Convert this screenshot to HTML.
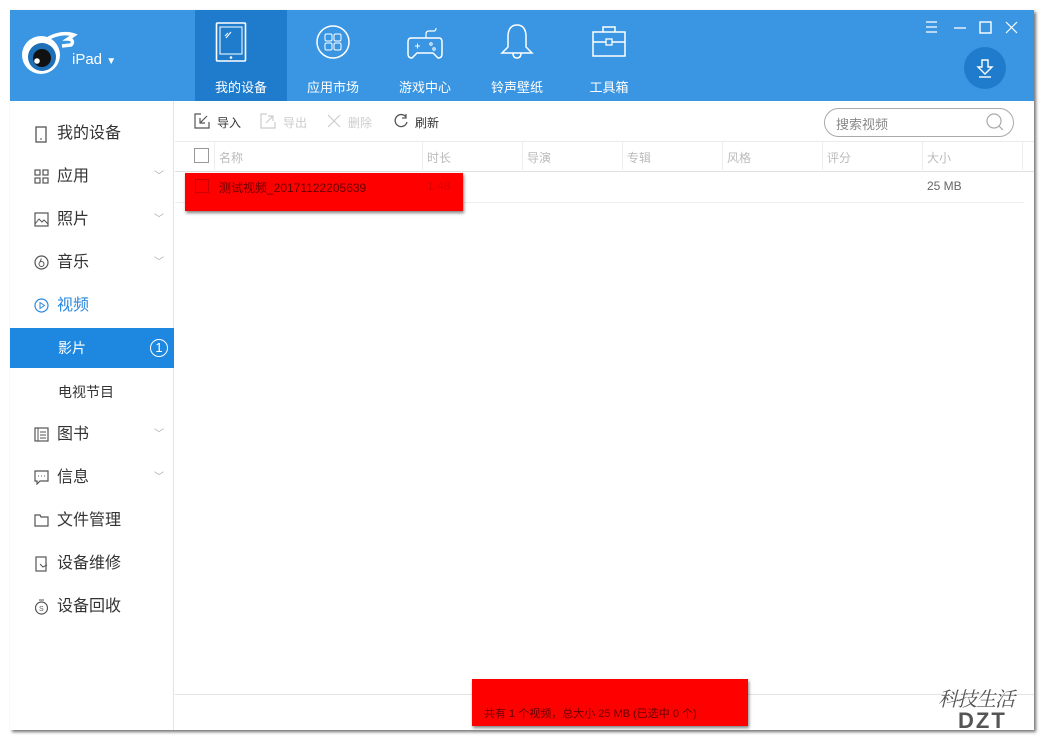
<!DOCTYPE html>
<html><head><meta charset="utf-8">
<style>
*{margin:0;padding:0;box-sizing:border-box}
body{width:1048px;height:742px;background:#fff;position:relative;overflow:hidden;font-family:"Liberation Sans","Noto Sans CJK SC",sans-serif;font-size:13px;color:#333}
.win{position:absolute;left:10px;top:10px;width:1024px;height:720px;background:#fff;box-shadow:2px 2px 3px rgba(0,0,0,.55)}
.hdr{position:absolute;left:0;top:0;width:1024px;height:91px;background:#3a96e2}
.tab{position:absolute;top:0;width:92px;height:91px;color:#fff;text-align:center;font-size:13px}
.tab.act{background:#1f7ccc}
.tab svg{position:absolute;left:26px;top:12px}
.tab span{position:absolute;left:0;right:0;top:67px}
.side{position:absolute;left:0;top:91px;width:164px;height:629px;border-right:1px solid #e3e3e3}
.it{position:absolute;left:0;width:164px;height:40px;line-height:40px;font-size:16px;color:#333}
.it svg{position:absolute;left:24px;top:12px}
.it .t{position:absolute;left:47px}
.it .ch{position:absolute;right:10px;top:0;font-size:10px;color:#aaa}
.sub{font-size:14px}
.sub .t{left:48px}
.tb{position:absolute;font-size:12px;color:#333;top:104px}
.th{position:absolute;top:149px;font-size:12px;color:#bbb}
.vl{position:absolute;top:142px;height:28px;width:1px;background:#eee}
</style></head><body>
<div class="win">
<div class="hdr">
 <svg style="position:absolute;left:8px;top:20px" width="60" height="50" viewBox="0 0 60 50">
  <path d="M28 10 C36 4 48 2 56 5 L50 9 C54 9 56 12 53 15 L44 16" fill="none" stroke="#fff" stroke-width="3.5"/>
  <circle cx="23" cy="25" r="19" fill="#fff"/>
  <circle cx="24" cy="27" r="14" fill="#1d6fb8"/>
  <circle cx="24" cy="28" r="9" fill="#111"/>
  <circle cx="19" cy="31" r="2.8" fill="#fff"/>
 </svg>
 <div style="position:absolute;left:62px;top:41px;color:#fff;font-size:15px">iPad <span style="font-size:10px">▼</span></div>
 <div class="tab act" style="left:185px">
  <svg style="left:20px" width="40" height="42" viewBox="0 0 40 42"><rect x="1.5" y="1" width="29" height="38" rx="1" fill="none" stroke="#fff" stroke-width="1.6"/><rect x="5" y="5" width="22" height="27" fill="none" stroke="#fff" stroke-width="1"/><circle cx="16" cy="35.5" r="1.3" fill="#fff"/><path d="M13 11l-3 3M16 10l-5 6" stroke="#fff"/></svg>
  <span>我的设备</span></div>
 <div class="tab" style="left:277px">
  <svg width="40" height="42" viewBox="0 0 40 42"><circle cx="20" cy="20" r="16" fill="none" stroke="#fff" stroke-width="1.5"/><rect x="12" y="12" width="7" height="7" rx="1.5" fill="none" stroke="#fff"/><rect x="21" y="12" width="7" height="7" rx="1.5" fill="none" stroke="#fff"/><rect x="12" y="21" width="7" height="7" rx="1.5" fill="none" stroke="#fff"/><rect x="21" y="21" width="7" height="7" rx="1.5" fill="none" stroke="#fff"/></svg>
  <span>应用市场</span></div>
 <div class="tab" style="left:369px">
  <svg width="40" height="42" viewBox="0 0 40 42"><path d="M6 16h28q3 0 3 4v12q0 4-4 4l-5-5H12l-5 5q-4 0-4-4V20q0-4 3-4z" fill="none" stroke="#fff" stroke-width="1.5"/><path d="M21 16v-4q0-3 3-3h5q2 0 2-3" fill="none" stroke="#fff" stroke-width="1.2"/><path d="M10 24h5M12.5 21.5v5" stroke="#fff"/><circle cx="26" cy="22" r="1.2" fill="none" stroke="#fff"/><circle cx="29" cy="27" r="1.2" fill="none" stroke="#fff"/></svg>
  <span>游戏中心</span></div>
 <div class="tab" style="left:461px">
  <svg width="40" height="42" viewBox="0 0 40 42"><path d="M20 3q-8 0-9 10v12l-6 6h30l-6-6V13q-1-10-9-10z" fill="none" stroke="#fff" stroke-width="1.5"/><path d="M16 31q0 5 4 5t4-5" fill="none" stroke="#fff" stroke-width="1.5"/></svg>
  <span>铃声壁纸</span></div>
 <div class="tab" style="left:553px">
  <svg width="40" height="42" viewBox="0 0 40 42"><rect x="4" y="10" width="32" height="24" fill="none" stroke="#fff" stroke-width="1.5"/><path d="M14 10V5h12v5M4 20h13M23 20h13" fill="none" stroke="#fff" stroke-width="1.5"/><rect x="17" y="17" width="6" height="6" fill="none" stroke="#fff" stroke-width="1.3"/></svg>
  <span>工具箱</span></div>
 <svg style="position:absolute;left:914px;top:10px" width="100" height="16" viewBox="0 0 100 16">
  <path d="M2 2h11M2 7h11M2 12h11" stroke="#fff" stroke-width="1.2"/>
  <path d="M30 8h12" stroke="#fff" stroke-width="1.3"/>
  <rect x="56" y="2" width="11" height="11" fill="none" stroke="#fff" stroke-width="1.4"/>
  <path d="M82 2l11 11M93 2L82 13" stroke="#fff" stroke-width="1.2"/>
 </svg>
 <div style="position:absolute;left:954px;top:37px;width:42px;height:42px;border-radius:50%;background:#1f7ccc"></div>
 <svg style="position:absolute;left:964px;top:47px" width="22" height="22" viewBox="0 0 22 22"><path d="M8 3h6v7h4l-7 7-7-7h4z" fill="none" stroke="#fff" stroke-width="1.4"/><path d="M5 20h12" stroke="#fff" stroke-width="1.4"/></svg>
</div>

<div class="side">
 <div class="it" style="top:13px"><svg width="14" height="17" viewBox="0 0 14 17"><rect x="2" y="1" width="10" height="15" fill="none" stroke="#555" stroke-width="1.3"/><path d="M6 13h2" stroke="#555"/></svg><span class="t">我的设备</span></div>
 <div class="it" style="top:56px"><svg width="15" height="15" viewBox="0 0 15 15"><g fill="none" stroke="#555" stroke-width="1.2"><rect x="1" y="1" width="5" height="5"/><rect x="9" y="1" width="5" height="5"/><rect x="1" y="9" width="5" height="5"/><rect x="9" y="9" width="5" height="5"/></g></svg><span class="t">应用</span><span class="ch">﹀</span></div>
 <div class="it" style="top:99px"><svg width="15" height="15" viewBox="0 0 15 15"><rect x="1" y="1" width="13" height="13" fill="none" stroke="#555" stroke-width="1.2"/><path d="M1 12l4-5 3 3 2-2 4 4" fill="none" stroke="#555"/></svg><span class="t">照片</span><span class="ch">﹀</span></div>
 <div class="it" style="top:142px"><svg width="15" height="15" viewBox="0 0 15 15"><circle cx="7.5" cy="7.5" r="6.5" fill="none" stroke="#555" stroke-width="1.2"/><circle cx="7.5" cy="9" r="2.5" fill="none" stroke="#555"/><path d="M6 6.5l1.5-3" stroke="#555"/></svg><span class="t">音乐</span><span class="ch">﹀</span></div>
 <div class="it" style="top:185px;color:#2a8ae0"><svg width="15" height="15" viewBox="0 0 15 15"><circle cx="7.5" cy="7.5" r="6.5" fill="none" stroke="#2a8ae0" stroke-width="1.2"/><path d="M6 4.5v6l4.5-3z" fill="none" stroke="#2a8ae0"/></svg><span class="t">视频</span></div>
 <div class="it sub" style="top:227px;background:#1e88e0;color:#fff"><span class="t">影片</span>
  <span style="position:absolute;left:140px;top:11px;width:18px;height:18px;border:1.3px solid #fff;border-radius:50%;line-height:16px;text-align:center;font-size:13px">1</span></div>
 <div class="it sub" style="top:271px"><span class="t">电视节目</span></div>
 <div class="it" style="top:314px"><svg width="15" height="15" viewBox="0 0 15 15"><rect x="1" y="1" width="13" height="13" fill="none" stroke="#555" stroke-width="1.2"/><path d="M4 1v13M6 5h6M6 8h6M6 11h6" stroke="#555"/></svg><span class="t">图书</span><span class="ch">﹀</span></div>
 <div class="it" style="top:357px"><svg width="15" height="15" viewBox="0 0 15 15"><path d="M1 1h13v10H6l-3 3v-3H1z" fill="none" stroke="#555" stroke-width="1.2"/><path d="M4 6h1M7 6h1M10 6h1" stroke="#555"/></svg><span class="t">信息</span><span class="ch">﹀</span></div>
 <div class="it" style="top:400px"><svg width="15" height="15" viewBox="0 0 15 15"><path d="M1 2h5l1 2h7v9H1z" fill="none" stroke="#555" stroke-width="1.2"/></svg><span class="t">文件管理</span></div>
 <div class="it" style="top:443px"><svg width="15" height="16" viewBox="0 0 15 16"><rect x="2" y="1" width="10" height="14" fill="none" stroke="#555" stroke-width="1.2"/><path d="M6 8l3 3 4-2" fill="none" stroke="#555"/></svg><span class="t">设备维修</span></div>
 <div class="it" style="top:486px"><svg width="15" height="16" viewBox="0 0 15 16"><circle cx="7.5" cy="9" r="6" fill="none" stroke="#555" stroke-width="1.2"/><path d="M5 1h5" stroke="#555"/><text x="5" y="12" font-size="7" fill="#555">S</text></svg><span class="t">设备回收</span></div>
</div>
</div>

<!-- toolbar -->
<svg style="position:absolute;left:194px;top:113px" width="16" height="16" viewBox="0 0 16 16"><path d="M7 1H1v14h14V9" fill="none" stroke="#555" stroke-width="1.2"/><path d="M13 3L6 10M6 5v5h5" fill="none" stroke="#555" stroke-width="1.2"/></svg>
<div class="tb" style="left:217px;top:114px">导入</div>
<svg style="position:absolute;left:260px;top:113px" width="16" height="16" viewBox="0 0 16 16"><path d="M7 1H1v14h14V9" fill="none" stroke="#ccc" stroke-width="1.2"/><path d="M6 10l7-7M8 3h5v5" fill="none" stroke="#ccc" stroke-width="1.2"/></svg>
<div class="tb" style="left:283px;top:114px;color:#ccc">导出</div>
<svg style="position:absolute;left:327px;top:114px" width="14" height="14" viewBox="0 0 14 14"><path d="M1 1l12 12M13 1L1 13" stroke="#ccc" stroke-width="1.2"/></svg>
<div class="tb" style="left:348px;top:114px;color:#ccc">删除</div>
<svg style="position:absolute;left:393px;top:113px" width="16" height="16" viewBox="0 0 16 16"><path d="M13 4A6 6 0 1 0 14 9" fill="none" stroke="#555" stroke-width="1.3"/><path d="M13 1v4h-4" fill="none" stroke="#555" stroke-width="1.2"/></svg>
<div class="tb" style="left:415px;top:114px">刷新</div>
<div style="position:absolute;left:824px;top:108px;width:190px;height:29px;border:1px solid #aaa;border-radius:15px"></div>
<div style="position:absolute;left:836px;top:114px;font-size:13px;color:#888">搜索视频</div>
<svg style="position:absolute;left:985px;top:112px" width="20" height="20" viewBox="0 0 20 20"><circle cx="9" cy="9" r="7" fill="none" stroke="#aaa" stroke-width="1.2"/><path d="M14 14l4 4" stroke="#aaa" stroke-width="1.2"/></svg>

<!-- table header -->
<div style="position:absolute;left:175px;top:141px;width:859px;height:1px;background:#eaeaea"></div>
<div style="position:absolute;left:175px;top:171px;width:859px;height:1px;background:#e0e0e0"></div>
<div style="position:absolute;left:194px;top:148px;width:15px;height:15px;border:1px solid #999"></div>
<div class="vl" style="left:214px"></div><div class="vl" style="left:422px"></div><div class="vl" style="left:522px"></div><div class="vl" style="left:622px"></div><div class="vl" style="left:722px"></div><div class="vl" style="left:822px"></div><div class="vl" style="left:922px"></div><div class="vl" style="left:1022px"></div>
<div class="th" style="left:219px">名称</div><div class="th" style="left:427px">时长</div><div class="th" style="left:527px">导演</div><div class="th" style="left:627px">专辑</div><div class="th" style="left:727px">风格</div><div class="th" style="left:827px">评分</div><div class="th" style="left:927px">大小</div>
<div style="position:absolute;left:175px;top:202px;width:849px;height:1px;background:#eee"></div>
<div style="position:absolute;left:927px;top:179px;font-size:12px;color:#666">25 MB</div>
<div style="position:absolute;left:185px;top:173px;width:278px;height:38px;background:#f00;box-shadow:1px 2px 3px rgba(0,0,0,.5)"></div>
<div style="position:absolute;left:195px;top:179px;width:14px;height:14px;border:1px solid #c00"></div>
<div style="position:absolute;left:219px;top:179px;font-size:12px;color:#600">测试视频_20171122205639</div>
<div style="position:absolute;left:427px;top:179px;font-size:12px;color:#d00">1:48</div>

<!-- footer -->
<div style="position:absolute;left:175px;top:694px;width:859px;height:1px;background:#e3e3e3"></div>
<div style="position:absolute;left:472px;top:679px;width:276px;height:47px;background:#f00;box-shadow:1px 2px 3px rgba(0,0,0,.5)"></div>
<div style="position:absolute;left:484px;top:705px;font-size:11px;color:#600">共有 1 个视频，总大小 25 MB (已选中 0 个)</div>
<div style="position:absolute;left:938px;top:683px;font-size:20px;color:#555;font-family:'Liberation Serif','Noto Serif CJK SC',serif;font-style:italic;letter-spacing:-1px">科技生活</div>
<div style="position:absolute;left:958px;top:708px;font-size:22px;font-weight:bold;color:#555;letter-spacing:2px">DZT</div>
</body></html>
